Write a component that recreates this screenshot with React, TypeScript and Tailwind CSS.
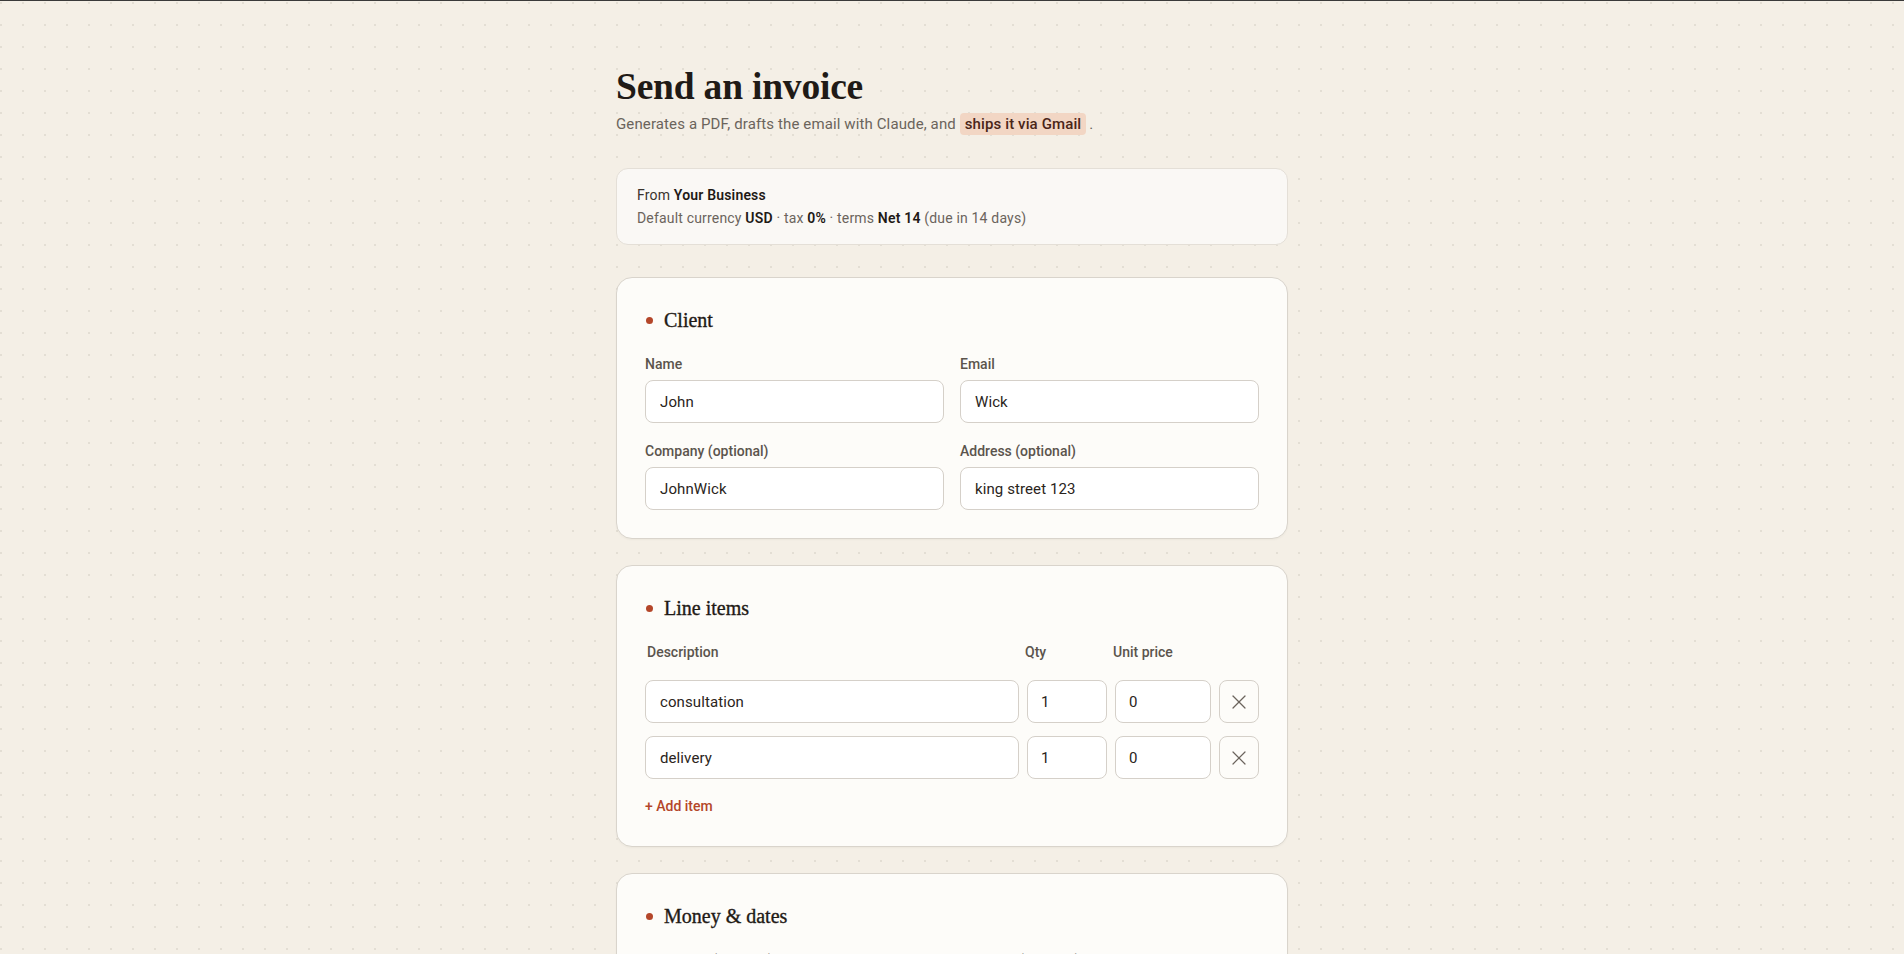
import React from "react";
import { X } from "lucide-react";

const sans = { fontFamily: "Roboto, 'Liberation Sans', sans-serif" };

function SectionTitle({ title }: { title: string }) {
  return (
    <div className="flex items-center gap-[11px] h-7 pl-[1px]">
      <span className="w-[7px] h-[7px] rounded-full bg-[#b4462a]" />
      <h2 className="font-['Liberation_Serif',serif] text-[20px] font-normal [-webkit-text-stroke:0.35px_#1f1a16] text-[#1f1a16] leading-7">
        {title}
      </h2>
    </div>
  );
}

function Field({ label, value }: { label: string; value: string }) {
  return (
    <div className="flex flex-col">
      <label className="text-[14px] leading-5 font-medium text-[#5b544d]">{label}</label>
      <input
        defaultValue={value}
        className="mt-1.5 h-[43px] w-full rounded-lg border border-[#d5d0c9] bg-white px-[14px] text-[15px] tracking-[0.1px] text-[#2a2420] outline-none"
      />
    </div>
  );
}

function Card({ children }: { children: React.ReactNode }) {
  return (
    <section className="rounded-2xl border border-[#d9d4cc] bg-[#fdfcf9] px-7 pt-7 pb-7 shadow-[0_1px_2px_rgba(60,40,20,0.04)]">
      {children}
    </section>
  );
}

export default function App() {
  const items = [
    { desc: "consultation", qty: "1", price: "0" },
    { desc: "delivery", qty: "1", price: "0" },
  ];

  return (
    <div
      style={sans}
      className="min-h-screen border-t border-[#3a3a3a] bg-[#f4efe6] bg-[radial-gradient(circle,#e3ded4_1px,transparent_1.3px)] bg-[size:22px_22px] bg-[position:-10px_-9px] text-[#1f1a16]"
    >
      <main className="mx-auto max-w-2xl pt-[66px] pb-16">
        <h1 className="font-['Liberation_Serif',serif] text-[37.5px] leading-10 font-semibold tracking-[-0.2px] text-[#1f1a16]">
          Send an invoice
        </h1>
        <p className="mt-[5px] text-[15px] leading-6 tracking-[0.12px] text-[#6b645c]">
          Generates a PDF, drafts the email with Claude, and{" "}
          <span className="rounded-[4px] bg-[#f2d6c4] px-[5px] py-[2px] font-medium text-[#4a2518]">
            ships it via Gmail
          </span>
          <span className="ml-[3px]">.</span>
        </p>

        <div className="mt-8 rounded-xl border border-[#e4dfd7] bg-[#faf8f5] px-5 pt-[15px] pb-[14px] text-[14px] leading-[23px] tracking-[0.18px]">
          <div className="text-[#3a332d]">
            From <span className="font-semibold text-[#1f1a16]">Your Business</span>
          </div>
          <div className="text-[#6b645c]">
            Default currency <span className="font-semibold text-[#1f1a16]">USD</span> · tax{" "}
            <span className="font-semibold text-[#1f1a16]">0%</span> · terms{" "}
            <span className="font-semibold text-[#1f1a16]">Net 14</span> (due in 14 days)
          </div>
        </div>

        <div className="mt-8 flex flex-col gap-[26px]">
          <Card>
            <SectionTitle title="Client" />
            <div className="mt-5 grid grid-cols-2 gap-x-4 gap-y-[18px]">
              <Field label="Name" value="John" />
              <Field label="Email" value="Wick" />
              <Field label="Company (optional)" value="JohnWick" />
              <Field label="Address (optional)" value="king street 123" />
            </div>
          </Card>

          <Card>
            <SectionTitle title="Line items" />
            <div className="mt-5 grid grid-cols-[1fr_80px_96px_40px] gap-x-2 text-[14px] leading-5 font-medium text-[#5b544d]">
              <span className="pl-0.5">Description</span>
              <span className="-ml-0.5">Qty</span>
              <span className="-ml-0.5">Unit price</span>
              <span />
            </div>
            <div className="mt-[18px] flex flex-col gap-[13px]">
              {items.map((it) => (
                <div key={it.desc} className="grid grid-cols-[1fr_80px_96px_40px] gap-x-2">
                  <input
                    defaultValue={it.desc}
                    className="h-[43px] rounded-lg border border-[#d5d0c9] bg-white px-[14px] text-[15px] tracking-[0.1px] text-[#2a2420] outline-none"
                  />
                  <input
                    defaultValue={it.qty}
                    className="h-[43px] w-full rounded-lg border border-[#d5d0c9] bg-white px-[13px] text-[15px] text-[#2a2420] outline-none"
                  />
                  <input
                    defaultValue={it.price}
                    className="h-[43px] w-full rounded-lg border border-[#d5d0c9] bg-white px-[13px] text-[15px] text-[#2a2420] outline-none"
                  />
                  <button className="flex h-[43px] items-center justify-center rounded-lg border border-[#d5d0c9] bg-[#fdfcf9] text-[#6b645d]">
                    <X size={24} strokeWidth={1.2} />
                  </button>
                </div>
              ))}
            </div>
            <button className="mt-[17px] text-[14px] leading-5 font-medium text-[#b4462a]">+ Add item</button>
          </Card>

          <Card>
            <SectionTitle title="Money & dates" />
            <div className="mt-5 grid grid-cols-2 gap-x-4 gap-y-[18px]">
              <Field label="Tax rate % (optional)" value="0" />
              <Field label="Due date (optional)" value="" />
            </div>
          </Card>
        </div>
      </main>
    </div>
  );
}
